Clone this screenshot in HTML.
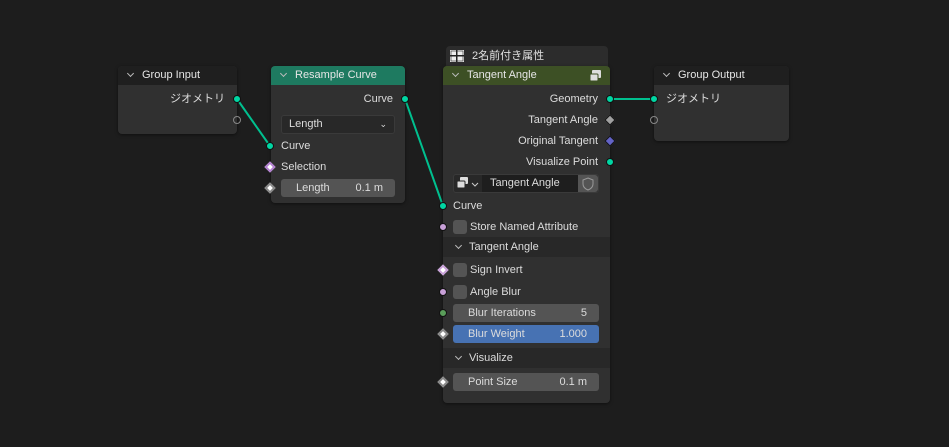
<!DOCTYPE html>
<html><head><meta charset="utf-8"><style>
*{margin:0;padding:0;box-sizing:border-box}
body{width:949px;height:447px;background:#1d1d1d;overflow:hidden;position:relative;font-family:"Liberation Sans","Noto Sans CJK JP",sans-serif;font-size:11px;color:#dcdcdc}
.a{position:absolute}
.node{position:absolute;background:#303030;border-radius:4px;box-shadow:0 1px 3px rgba(0,0,0,.5)}
.hd{position:absolute;left:0;right:0;top:0;height:19px;border-radius:4px 4px 0 0;line-height:19px;padding-left:24px;color:#e6e6e6}
.chev{position:absolute;left:10px;top:5px;width:5px;height:5px;border-right:1.3px solid #bbb;border-bottom:1.3px solid #bbb;transform:rotate(45deg)}
.r{position:absolute;text-align:right;line-height:16px}
.l{position:absolute;line-height:16px}
.s{position:absolute;width:8px;height:8px;border-radius:50%;margin:-4px 0 0 -4px;background:#00d6a3;border:1px solid #111}
.d{position:absolute;width:8px;height:8px;margin:-4px 0 0 -4px;transform:rotate(45deg);border:1px solid #111}
.fld{position:absolute;background:#545454;border-radius:3px;height:18px;line-height:18px;padding:0 12px 0 15px}
.fld span{float:right}
.cb{position:absolute;width:14px;height:14px;background:#545454;border-radius:3px;top:0}
.ph{position:absolute;background:#282828;height:20px;line-height:20px;padding-left:26px}
.ph .chev{left:13px;top:6px}
</style></head><body>
<svg class="a" style="left:0;top:0" width="949" height="447">
<path d="M237 99 L270 146" stroke="#00c08f" stroke-width="2" fill="none"/>
<path d="M405 99 L443 206" stroke="#00c08f" stroke-width="2" fill="none"/>
<path d="M610 99 L654 99" stroke="#00c08f" stroke-width="2"/>
</svg>

<div class="node" style="left:118px;top:66px;width:119px;height:68px">
<div class="hd" style="background:#1f1f1f"><div class="chev"></div>Group Input</div>
<div class="r" style="right:12px;top:25px">ジオメトリ</div>
</div>
<div class="s" style="left:237px;top:99px"></div>
<div class="s" style="left:237px;top:120px;background:none;border:1.5px solid #888"></div>

<div class="node" style="left:271px;top:66px;width:134px;height:137px">
<div class="hd" style="background:#1e7a60"><div class="chev"></div>Resample Curve</div>
<div class="r" style="right:12px;top:25px">Curve</div>
<div class="a" style="left:10px;top:49px;width:114px;height:19px;background:#282828;border:1px solid #3a3a3a;border-radius:3px;line-height:17px;padding-left:7px">Length<span style="position:absolute;right:7px;top:0;font-size:9px">⌄</span></div>
<div class="l" style="left:10px;top:72px">Curve</div>
<div class="l" style="left:10px;top:93px">Selection</div>
<div class="fld" style="left:10px;top:113px;width:114px">Length<span>0.1 m</span></div>
</div>
<div class="s" style="left:405px;top:99px"></div>
<div class="s" style="left:270px;top:146px"></div>
<div class="d" style="left:270px;top:167px;background:#fff;border:2px solid #b27fd0"></div>
<div class="d" style="left:270px;top:188px;background:#fff;border:2px solid #888"></div>

<div class="a" style="left:446px;top:46px;width:162px;height:22px;background:#2c2c2c;border-radius:4px 4px 0 0;line-height:20px;padding-left:26px;color:#e0e0e0">2名前付き属性
<svg class="a" style="left:4px;top:4px" width="14" height="12"><rect x="0" y="0" width="14" height="12" fill="#eee"/><rect x="6" y="0" width="1.5" height="12" fill="#222"/><rect x="0" y="5" width="14" height="1.5" fill="#222"/><rect x="1" y="1" width="12" height="10" fill="none" stroke="#222" stroke-width="0.6"/></svg></div>

<div class="node" style="left:443px;top:66px;width:167px;height:337px">
<div class="hd" style="background:#3d5025"><div class="chev"></div>Tangent Angle
<svg class="a" style="right:8px;top:3px" width="13" height="13"><rect x="3" y="1" width="9" height="8" rx="1" fill="#ddd"/><rect x="1" y="5" width="8" height="7" rx="1" fill="#ddd" stroke="#3d5025"/></svg></div>
<div class="r" style="right:12px;top:25px">Geometry</div>
<div class="r" style="right:12px;top:46px">Tangent Angle</div>
<div class="r" style="right:12px;top:67px">Original Tangent</div>
<div class="r" style="right:12px;top:88px">Visualize Point</div>
<div class="a" style="left:10px;top:108px;width:146px;height:19px;background:#282828;border:1px solid #3a3a3a;border-radius:3px"></div>
<svg class="a" style="left:13px;top:110px" width="26" height="15"><rect x="4" y="1" width="8" height="7" rx="1" fill="#ddd"/><rect x="1" y="5" width="8" height="7" rx="1" fill="#ddd" stroke="#282828"/><path d="M16 7 l3 3 l3 -3" stroke="#ccc" fill="none"/></svg>
<div class="a" style="left:39px;top:109px;width:96px;height:17px;background:#1e1e1e;line-height:17px;padding-left:8px">Tangent Angle</div>
<div class="a" style="left:135px;top:109px;width:20px;height:17px;background:#545454;border-radius:0 3px 3px 0"><svg width="20" height="17"><path d="M10 3 L15 5 L15 9 Q15 13 10 15 Q5 13 5 9 L5 5 Z" fill="none" stroke="#999"/></svg></div>
<div class="l" style="left:10px;top:132px">Curve</div>
<div class="cb" style="left:10px;top:154px"></div>
<div class="l" style="left:27px;top:153px">Store Named Attribute</div>
<div class="ph" style="left:0;top:171px;width:167px"><div class="chev"></div>Tangent Angle</div>
<div class="cb" style="left:10px;top:197px"></div>
<div class="l" style="left:27px;top:196px">Sign Invert</div>
<div class="cb" style="left:10px;top:219px"></div>
<div class="l" style="left:27px;top:218px">Angle Blur</div>
<div class="fld" style="left:10px;top:238px;width:146px">Blur Iterations<span>5</span></div>
<div class="fld" style="left:10px;top:259px;width:146px;background:#4772b3">Blur Weight<span>1.000</span></div>
<div class="ph" style="left:0;top:282px;width:167px"><div class="chev"></div>Visualize</div>
<div class="fld" style="left:10px;top:307px;width:146px">Point Size<span>0.1 m</span></div>
</div>
<div class="s" style="left:610px;top:99px"></div>
<div class="d" style="left:610px;top:120px;background:#a0a0a0"></div>
<div class="d" style="left:610px;top:141px;background:#6363c7"></div>
<div class="s" style="left:610px;top:162px"></div>
<div class="s" style="left:443px;top:206px"></div>
<div class="s" style="left:443px;top:227px;background:#c8a0d8"></div>
<div class="d" style="left:443px;top:270px;background:#fff;border:2px solid #c8a0d8"></div>
<div class="s" style="left:443px;top:292px;background:#c8a0d8"></div>
<div class="s" style="left:443px;top:313px;background:#5a9e5a"></div>
<div class="d" style="left:443px;top:334px;background:#fff;border:2px solid #888"></div>
<div class="d" style="left:443px;top:382px;background:#fff;border:2px solid #888"></div>

<div class="node" style="left:654px;top:66px;width:135px;height:75px">
<div class="hd" style="background:#1f1f1f"><div class="chev"></div>Group Output</div>
<div class="l" style="left:12px;top:25px">ジオメトリ</div>
</div>
<div class="s" style="left:654px;top:99px"></div>
<div class="s" style="left:654px;top:120px;background:none;border:1.5px solid #888"></div>
</body></html>
